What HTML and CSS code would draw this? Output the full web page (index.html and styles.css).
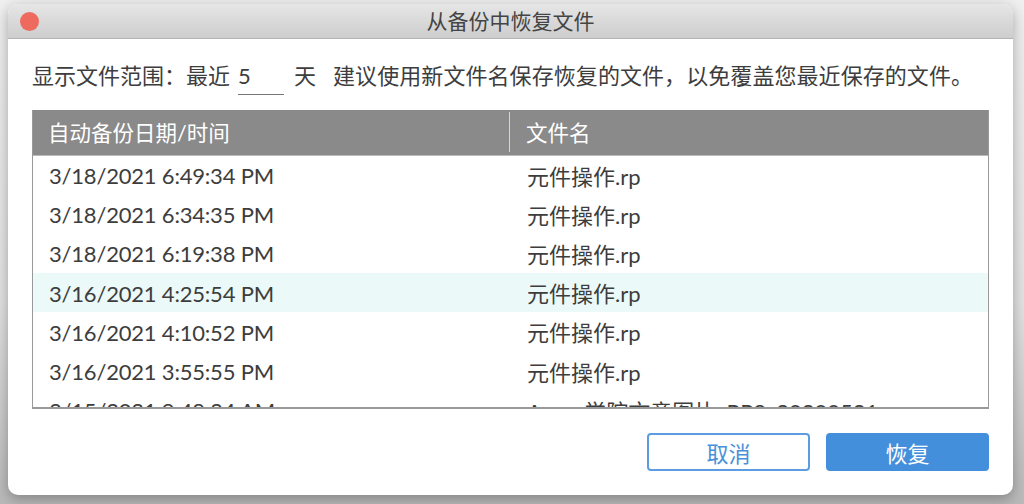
FILE: index.html
```html
<!DOCTYPE html>
<html lang="zh-CN">
<head>
    <meta charset="UTF-8">
    <title>从备份中恢复文件</title>
    <link rel="stylesheet" href="styles.css">
</head>
<body>
    <div class="window">
        <div class="titlebar">
            <span class="close-dot"></span>
            <span class="title">从备份中恢复文件</span>
        </div>
        <div class="content">
            <div class="range-row">
                <span class="range-label">显示文件范围：</span>
                <span>最近</span>
                <span class="days-input">5</span>
                <span>天</span>
                <span class="range-hint">建议使用新文件名保存恢复的文件，以免覆盖您最近保存的文件。</span>
            </div>
            <div class="file-table">
                <div class="table-head">
                    <div class="col-date head-date"><span class="head-label">自动备份日期/时间</span></div>
                    <div class="col-name">文件名</div>
                </div>
                <div class="table-body">
                    <div class="table-row"><div class="col-date">3/18/2021 6:49:34 PM</div><div class="col-name">元件操作.rp</div></div>
                    <div class="table-row"><div class="col-date">3/18/2021 6:34:35 PM</div><div class="col-name">元件操作.rp</div></div>
                    <div class="table-row"><div class="col-date">3/18/2021 6:19:38 PM</div><div class="col-name">元件操作.rp</div></div>
                    <div class="table-row selected"><div class="col-date">3/16/2021 4:25:54 PM</div><div class="col-name">元件操作.rp</div></div>
                    <div class="table-row"><div class="col-date">3/16/2021 4:10:52 PM</div><div class="col-name">元件操作.rp</div></div>
                    <div class="table-row"><div class="col-date">3/16/2021 3:55:55 PM</div><div class="col-name">元件操作.rp</div></div>
                    <div class="table-row"><div class="col-date">3/15/2021 9:48:34 AM</div><div class="col-name">Axure学院文章图片_RP9_20200521</div></div>
                </div>
            </div>
            <div class="actions">
                <button class="btn btn-cancel">取消</button>
                <button class="btn btn-primary">恢复</button>
            </div>
        </div>
    </div>
</body>
</html>
```

FILE: styles.css
```css
html, body {
    height: 100%;
}

body {
    margin: 0;
    padding: 4px 11px 9px 8px;
    box-sizing: border-box;
    overflow: hidden;
    background: linear-gradient(#efefef, #e2e2e2 60%, #b9b9b9);
    font-family: Lato, "Noto Sans CJK SC", sans-serif;
    color: #3d3d3d;
}

.window {
    height: 491px;
    display: flex;
    flex-direction: column;
    background: #fff;
    border-radius: 10px;
    overflow: hidden;
    box-shadow: 0 4px 14px rgba(0, 0, 0, 0.3);
}

.titlebar {
    position: relative;
    height: 35px;
    flex: none;
    display: flex;
    align-items: center;
    justify-content: center;
    background: linear-gradient(#e6e6e6, #cdcdcd);
    border-bottom: 1px solid #b4b4b4;
    box-sizing: border-box;
}

.close-dot {
    position: absolute;
    left: 12px;
    top: 8px;
    width: 19px;
    height: 19px;
    border-radius: 50%;
    background: #ee6a5f;
}

.title {
    font-size: 21px;
    line-height: 24px;
    color: #444;
}

.content {
    flex: 1;
    padding: 0 24px;
    display: flex;
    flex-direction: column;
}

.range-row {
    height: 71px;
    padding-top: 2px;
    box-sizing: border-box;
    display: flex;
    align-items: center;
    font-size: 22px;
    line-height: 30px;
}

.days-input {
    width: 46px;
    height: 34px;
    margin: 0 10px -4px 8px;
    border-bottom: 1px solid #777;
    box-sizing: border-box;
    line-height: 30px;
}

.range-hint {
    margin-left: 17px;
    letter-spacing: 0.07px;
}

.file-table {
    height: 299px;
    flex: none;
    border: 1px solid #999;
    border-top: none;
    border-bottom-width: 2px;
    box-sizing: border-box;
    display: flex;
    flex-direction: column;
    overflow: hidden;
    font-size: 22px;
    line-height: 30px;
}

.table-head {
    height: 45.5px;
    flex: none;
    margin: 0 -1px;
    display: flex;
    align-items: center;
    background: #8a8a8a;
    color: #fff;
    border-bottom: 1px solid #bbb;
    box-sizing: border-box;
    font-size: 21.5px;
}

.table-head .col-date {
    width: 478px;
    height: 40px;
    padding-top: 2px;
    display: flex;
    align-items: center;
    border-right: 1px solid #d6d6d6;
    letter-spacing: 0;
}

.table-head .col-name {
    padding: 2px 0 0 16px;
}

.table-body {
    flex: 1;
    overflow: hidden;
}

.table-row {
    height: 39.2px;
    display: flex;
    align-items: center;
}

.table-row.selected {
    background: #ecf9f9;
}

.col-date {
    width: 477px;
    padding: 2px 0 0 16px;
    box-sizing: border-box;
    flex: none;
    letter-spacing: -0.2px;
}

.col-name {
    padding: 3px 0 0 17px;
    white-space: nowrap;
}

.actions {
    flex: 1;
    display: flex;
    justify-content: flex-end;
    align-items: flex-start;
    gap: 16px;
    padding-top: 24px;
}

.btn {
    width: 163px;
    height: 38px;
    border-radius: 4px;
    font-family: inherit;
    font-size: 22px;
    cursor: pointer;
}

.btn-cancel {
    background: #fff;
    border: 2px solid #5c9ce0;
    color: #4a90d9;
}

.btn-primary {
    background: #448fdc;
    border: none;
    color: #fff;
}
```
